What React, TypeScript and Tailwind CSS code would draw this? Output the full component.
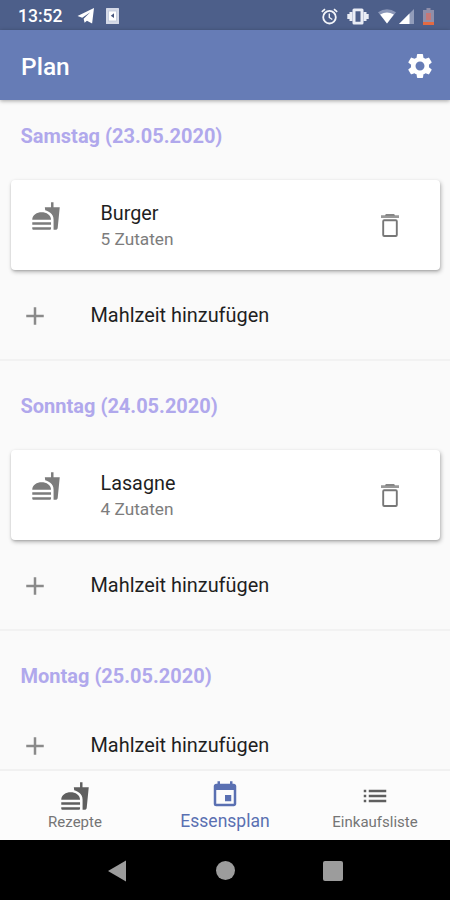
import React from "react";
import {
  MdAdd,
  MdEvent,
  MdFastfood,
  MdList,
  MdSettings,
} from "react-icons/md";

type Meal = {
  name: string;
  ingredients: number;
};

type Day = {
  title: string;
  meals: Meal[];
};

const days: Day[] = [
  { title: "Samstag (23.05.2020)", meals: [{ name: "Burger", ingredients: 5 }] },
  { title: "Sonntag (24.05.2020)", meals: [{ name: "Lasagne", ingredients: 4 }] },
  { title: "Montag (25.05.2020)", meals: [] },
];

function StatusBar() {
  return (
    <div className="flex h-[30px] shrink-0 items-center bg-[#4d5f8a] pl-[18px] pr-4 pt-0.5 text-white">
      <span className="w-[59px] pt-px text-[17.5px] font-medium leading-none">13:52</span>

      {/* Notifications */}
      <svg className="h-[16px] w-[18px]" viewBox="0 0 18 17">
        <path d="M0 8.5 17.5 0 15.5 16.5 10 13.5 7.5 15.8 6.5 11.5 13.5 4.5 5 10.3z" fill="#fff" />
      </svg>
      <svg className="ml-[11px] h-4 w-[13px]" viewBox="0 0 13 16">
        <rect width="13" height="16" rx="0.5" fill="#d5dae8" />
        <rect x="2.5" y="3" width="8" height="10" fill="#fff" stroke="#bfc7da" strokeWidth="0.8" />
        <path d="M8 5.3v4.8L4.8 7.7z" fill="#46557d" />
      </svg>

      <div className="ml-auto flex items-center">
        <svg className="h-[17px] w-[17px]" viewBox="0 0 17 17" fill="none" stroke="#f3f5fa">
          <circle cx="8.5" cy="9.2" r="6.3" strokeWidth="1.8" />
          <path d="M8.3 5.5v4l3 2" strokeWidth="1.4" />
          <path d="M.8 3.8 4 1.1M16.2 3.8 13 1.1" strokeWidth="1.7" />
        </svg>
        <svg className="ml-[9px] h-[17px] w-[22px]" viewBox="0 0 22 17" fill="#e9ecf5">
          <path
            fillRule="evenodd"
            d="M7 .5h8q1.5 0 1.5 1.5v13q0 1.5-1.5 1.5H7q-1.5 0-1.5-1.5V2Q5.5.5 7 .5zM8.5 3.3v10.4h5V3.3z"
          />
          <path d="M2.5 4h3v9h-3zM.3 6h2.5v5H.3zM16.5 4h3v9h-3zM19.2 6h2.5v5h-2.5z" />
        </svg>
        <svg className="ml-[9px] h-[15px] w-[18px]" viewBox="0 0 18 15">
          <path d="M0 3.2Q9-2.6 18 3.2L9 14.5z" fill="#8b97b8" />
          <path d="M2.2 5.5Q9 1.5 15.8 5.5L9 14.5z" fill="#fff" />
        </svg>
        <svg className="ml-[3px] h-[15px] w-[15px]" viewBox="0 0 15 15">
          <path d="M15 0v15H0z" fill="#919cba" />
          <path d="M10.5 4.5V15H0z" fill="#fff" />
        </svg>
        <svg className="ml-[9px] h-[17px] w-[11px]" viewBox="0 0 11 17">
          <path d="M3.5 0h4v2H11v15H0V2h3.5z" fill="#8f8ea9" />
          <path d="M3 5h5v7H3z" fill="#c57878" />
          <path d="M0 14h11v3H0z" fill="#e36a42" />
        </svg>
      </div>
    </div>
  );
}

function TrashIcon() {
  return (
    <svg className="h-[23px] w-[18px]" viewBox="0 0 18 23" fill="none">
      <path d="M5 0h8l1 1.3h4V4H0V1.3h4z" fill="#999" />
      <path d="M5 .3h8l.8 1.5H4.2z" fill="#808080" />
      <rect x="2.2" y="6.2" width="13.6" height="15.8" rx="1" stroke="#777" strokeWidth="1.9" />
    </svg>
  );
}

function MealCard({ meal }: { meal: Meal }) {
  return (
    <div className="my-2.5 ml-[11px] mr-2.5 flex h-[90px] rounded-[4px] bg-white pl-5 shadow-[1px_2px_4px_rgba(0,0,0,0.28),0_1px_2px_rgba(0,0,0,0.12)]">
      <MdFastfood className="mt-[21px] h-[30px] w-[30px] text-[#7c7c7c]" />
      <div className="ml-[39.5px] flex flex-col pt-[21px]">
        <span className="text-[19.8px] leading-[25px] text-[#1f1f1f]">{meal.name}</span>
        <span className="mt-px text-[17.25px] leading-[24px] text-[#7d7d7d]">
          {meal.ingredients} Zutaten
        </span>
      </div>
      <button className="ml-auto mr-[41px]">
        <TrashIcon />
      </button>
    </div>
  );
}

function DaySection({ day }: { day: Day }) {
  return (
    <section className="shrink-0">
      <h2 className="flex h-[70px] items-center pl-[20.5px] pt-px text-[20px] font-bold text-[#b0a8ec]">
        {day.title}
      </h2>

      {day.meals.map((meal) => (
        <MealCard key={meal.name} meal={meal} />
      ))}

      <button className="flex h-[70px] w-full items-center pl-5 pt-px">
        <MdAdd className="h-[30px] w-[30px] text-[#8a8a8a]" />
        <span className="ml-[40.5px] text-[19.9px] text-[#1f1f1f]">Mahlzeit hinzufügen</span>
      </button>
    </section>
  );
}

function BottomNav() {
  return (
    <nav className="grid h-[71px] shrink-0 grid-cols-3 border-t-2 border-[#f1f1f1] bg-[#fcfcfc] text-[#757575]">
      <div className="flex flex-col items-center pt-2.5">
        <MdFastfood className="h-[30px] w-[30px] text-[#5f5f5f]" />
        <span className="mt-px text-[15px] leading-[20px]">Rezepte</span>
      </div>
      <div className="flex flex-col items-center pt-[9px] text-[#5a70b2]">
        <MdEvent className="h-[30px] w-[30px]" />
        <span className="text-[17.5px] leading-[22px]">Essensplan</span>
      </div>
      <div className="flex flex-col items-center pt-2.5">
        <MdList className="h-[30px] w-[30px] text-[#5f5f5f]" />
        <span className="mt-px text-[15px] leading-[20px]">Einkaufsliste</span>
      </div>
    </nav>
  );
}

function SystemNav() {
  return (
    <div className="flex h-[60px] shrink-0 items-center justify-center gap-[88px] bg-black pt-px text-[#9c9c9c]">
      <svg className="h-[22px] w-[20px]" viewBox="0 0 20 22" fill="currentColor">
        <path d="M18 .5v21L0 11z" />
      </svg>
      <div className="h-[19px] w-[19px] rounded-full bg-[#9c9c9c]" />
      <div className="h-5 w-5 rounded-[2px] bg-[#9c9c9c]" />
    </div>
  );
}

export default function App() {
  return (
    <div className="flex h-[900px] w-[450px] flex-col overflow-hidden bg-[#fafafa] font-['Roboto',sans-serif]">
      <StatusBar />

      {/* App bar */}
      <header className="z-10 flex h-[70px] shrink-0 items-center justify-between bg-[#667cb6] pl-[21px] pr-[15px] text-white shadow-[0_1px_4px_rgba(0,0,0,0.35)]">
        <h1 className="pt-1 text-[24.5px] font-medium">Plan</h1>
        <MdSettings className="mt-px h-[30px] w-[30px]" />
      </header>

      {/* Meal plan */}
      <main className="flex min-h-0 flex-1 flex-col overflow-hidden">
        {days.map((day, i) => (
          <React.Fragment key={day.title}>
            {i > 0 && (
              <div className="flex h-5 shrink-0 items-center">
                <div className="h-0.5 w-full bg-[#f2f2f2]" />
              </div>
            )}
            <DaySection day={day} />
          </React.Fragment>
        ))}
      </main>

      <BottomNav />
      <SystemNav />
    </div>
  );
}
